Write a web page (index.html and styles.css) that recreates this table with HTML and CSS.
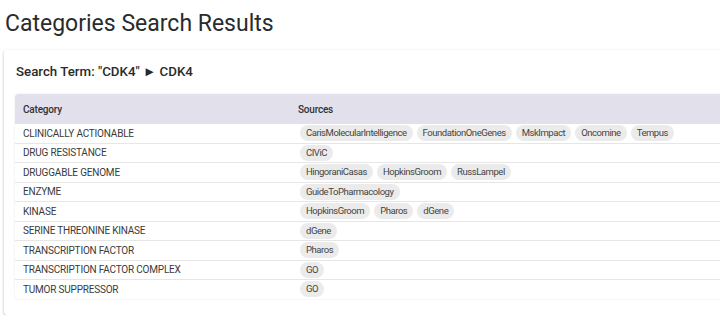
FILE: index.html
```html
<!DOCTYPE html>
<html>
<head>
<meta charset="utf-8">
<link rel="stylesheet" href="styles.css">
</head>
<body>
<h1 class="title">Categories Search Results</h1>
<div class="card">
  <h2 class="term">Search Term: "CDK4" ► CDK4</h2>
  <table class="results">
    <thead>
      <tr><th class="col-cat">Category</th><th>Sources</th></tr>
    </thead>
    <tbody>
      <tr><td>CLINICALLY ACTIONABLE</td><td><div class="chips"><span class="chip">CarisMolecularIntelligence</span><span class="chip">FoundationOneGenes</span><span class="chip">MskImpact</span><span class="chip">Oncomine</span><span class="chip">Tempus</span></div></td></tr>
      <tr><td>DRUG RESISTANCE</td><td><div class="chips"><span class="chip">CIViC</span></div></td></tr>
      <tr><td>DRUGGABLE GENOME</td><td><div class="chips"><span class="chip">HingoraniCasas</span><span class="chip">HopkinsGroom</span><span class="chip">RussLampel</span></div></td></tr>
      <tr><td>ENZYME</td><td><div class="chips"><span class="chip">GuideToPharmacology</span></div></td></tr>
      <tr><td>KINASE</td><td><div class="chips"><span class="chip">HopkinsGroom</span><span class="chip">Pharos</span><span class="chip">dGene</span></div></td></tr>
      <tr><td>SERINE THREONINE KINASE</td><td><div class="chips"><span class="chip">dGene</span></div></td></tr>
      <tr><td>TRANSCRIPTION FACTOR</td><td><div class="chips"><span class="chip">Pharos</span></div></td></tr>
      <tr><td>TRANSCRIPTION FACTOR COMPLEX</td><td><div class="chips"><span class="chip">GO</span></div></td></tr>
      <tr><td>TUMOR SUPPRESSOR</td><td><div class="chips"><span class="chip">GO</span></div></td></tr>
    </tbody>
  </table>
</div>
</body>
</html>
```
FILE: styles.css
```css
html, body {
  margin: 0;
  padding: 0;
  background: #ffffff;
  font-family: Roboto, "Liberation Sans", sans-serif;
  color: #333333;
  overflow: hidden;
}
body {
  width: 760px;
  padding-left: 4px;
}
.title {
  margin: 0;
  padding: 9px 0 0 1px;
  font-size: 23px;
  font-weight: 400;
  line-height: 30px;
  color: #2b2b2b;
}
.card {
  margin-top: 11px;
  padding: 12px 11px 16px 11px;
  background: #ffffff;
  box-shadow: 0 1px 3px rgba(0,0,0,0.25), 0 1px 1px rgba(0,0,0,0.08);
  border-radius: 3px;
}
.term {
  margin: 0 0 12px 1px;
  font-size: 13.3px;
  font-weight: 500;
  line-height: 20px;
  color: #2a2a2a;
}
.results {
  width: 100%;
  border-collapse: separate;
  border-spacing: 0;
  border-radius: 4px;
  box-shadow: 0 0 2px rgba(0,0,0,0.12);
}
.results th {
  background: #e2e0ea;
  text-align: left;
  font-weight: 500;
  font-size: 10px;
  letter-spacing: -0.2px;
  color: #333;
  height: 30px;
  padding: 0 8px;
}
.results th:first-child { border-top-left-radius: 4px; }
.col-cat { width: 259px; }
.results td {
  height: 18.5px;
  padding: 0 8px;
  border-top: 1px solid #e6e6e6;
  color: #3a3a3a;
  font-size: 10px;
  letter-spacing: -0.2px;
  white-space: nowrap;
}
.results tbody tr:first-child td { border-top: none; }
.results tbody tr:last-child td:first-child { border-bottom-left-radius: 4px; }
.chips {
  display: flex;
  gap: 4px;
  padding-left: 2px;
}
.chip {
  display: inline-block;
  background: #ebebeb;
  border-radius: 8px;
  padding: 0 6px;
  height: 16px;
  line-height: 16px;
  font-size: 9.5px;
  letter-spacing: -0.45px;
  color: #444;
}
```
